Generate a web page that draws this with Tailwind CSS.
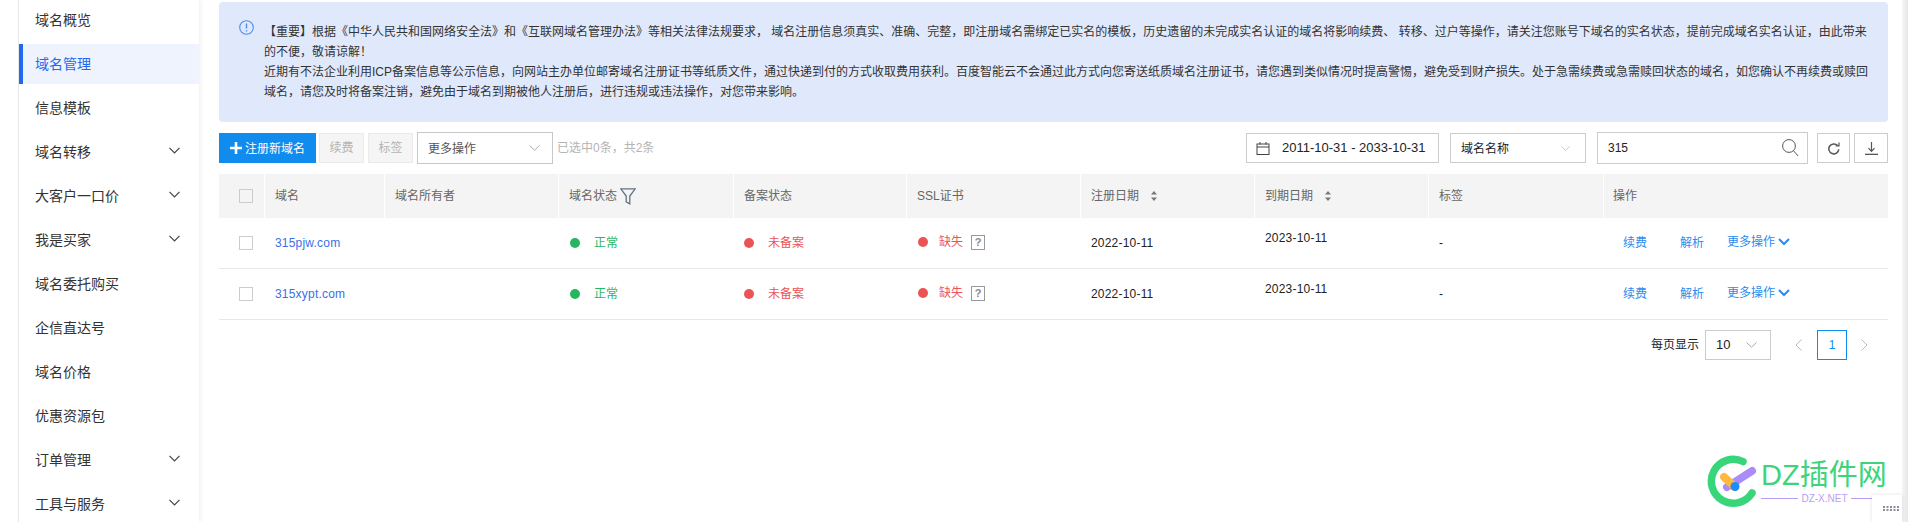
<!DOCTYPE html>
<html lang="zh-CN">
<head>
  <meta charset="UTF-8">
  <title>域名管理</title>
  <script src="https://cdn.jsdelivr.net/npm/@tailwindcss/browser@4"></script>
</head>
<body class="bg-white">
<div class="relative flex w-[1908px] h-[522px] overflow-hidden bg-white text-[12px] text-[#333] font-['Liberation_Sans','Noto_Sans_CJK_SC',sans-serif]">

  <!-- Sidebar -->
  <div class="w-[18px] shrink-0 border-r border-[#e8e8e8] box-content"></div>
  <div class="w-[180px] shrink-0 h-[522px] overflow-hidden flex flex-col gap-1 text-[14px] shadow-[2px_0_4px_rgba(0,0,0,0.06)]">
    <div class="h-10 shrink-0 flex items-center pt-px pl-4">域名概览</div>
    <div class="h-10 shrink-0 flex items-center pt-px pl-3 border-l-4 border-[#2468f2] bg-[#eef3fe] text-[#2468f2]">域名管理</div>
    <div class="h-10 shrink-0 flex items-center pt-px pl-4">信息模板</div>
    <div class="h-10 shrink-0 flex items-center pt-px justify-between pl-4 pr-[19px]">域名转移
      <svg class="mb-1" width="11" height="7" viewBox="0 0 11 7" fill="none" stroke="#444" stroke-width="1.2"><path d="M0.5 0.8 5.5 5.8 10.5 0.8"/></svg></div>
    <div class="h-10 shrink-0 flex items-center pt-px justify-between pl-4 pr-[19px]">大客户一口价
      <svg class="mb-1" width="11" height="7" viewBox="0 0 11 7" fill="none" stroke="#444" stroke-width="1.2"><path d="M0.5 0.8 5.5 5.8 10.5 0.8"/></svg></div>
    <div class="h-10 shrink-0 flex items-center pt-px justify-between pl-4 pr-[19px]">我是买家
      <svg class="mb-1" width="11" height="7" viewBox="0 0 11 7" fill="none" stroke="#444" stroke-width="1.2"><path d="M0.5 0.8 5.5 5.8 10.5 0.8"/></svg></div>
    <div class="h-10 shrink-0 flex items-center pt-px pl-4">域名委托购买</div>
    <div class="h-10 shrink-0 flex items-center pt-px pl-4">企信直达号</div>
    <div class="h-10 shrink-0 flex items-center pt-px pl-4">域名价格</div>
    <div class="h-10 shrink-0 flex items-center pt-px pl-4">优惠资源包</div>
    <div class="h-10 shrink-0 flex items-center pt-px justify-between pl-4 pr-[19px]">订单管理
      <svg class="mb-1" width="11" height="7" viewBox="0 0 11 7" fill="none" stroke="#444" stroke-width="1.2"><path d="M0.5 0.8 5.5 5.8 10.5 0.8"/></svg></div>
    <div class="h-10 shrink-0 flex items-center pt-px justify-between pl-4 pr-[19px]">工具与服务
      <svg class="mb-1" width="11" height="7" viewBox="0 0 11 7" fill="none" stroke="#444" stroke-width="1.2"><path d="M0.5 0.8 5.5 5.8 10.5 0.8"/></svg></div>
  </div>

  <!-- Main -->
  <div class="ml-5 w-[1669px] shrink-0 pt-[2px]">

    <!-- Notice -->
    <div class="h-[120px] rounded bg-[#e0e9fb] pl-5 pt-5 flex gap-[10px]">
      <svg class="shrink-0 mt-[-2px]" width="15" height="15" viewBox="0 0 15 15" fill="none" stroke="#4a8df0" stroke-width="1.1">
        <circle cx="7.5" cy="7.5" r="6.8"/><path d="M7.5 3.4V8.6M7.5 10.2V11.6" stroke-width="1.4"/>
      </svg>
      <p class="leading-5 whitespace-nowrap text-[12px]">
        【重要】根据《中华人民共和国网络安全法》和《互联网域名管理办法》等相关法律法规要求， 域名注册信息须真实、准确、完整，即注册域名需绑定已实名的模板，历史遗留的未完成实名认证的域名将影响续费、 转移、过户等操作，请关注您账号下域名的实名状态，提前完成域名实名认证，由此带来<br>
        的不便，敬请谅解！<br>
        近期有不法企业利用ICP备案信息等公示信息，向网站主办单位邮寄域名注册证书等纸质文件，通过快递到付的方式收取费用获利。百度智能云不会通过此方式向您寄送纸质域名注册证书，请您遇到类似情况时提高警惕，避免受到财产损失。处于急需续费或急需赎回状态的域名，如您确认不再续费或赎回<br>
        域名，请您及时将备案注销，避免由于域名到期被他人注册后，进行违规或违法操作，对您带来影响。
      </p>
    </div>

    <!-- Toolbar -->
    <div class="mt-[10px] h-8 flex items-center justify-between">
      <div class="flex items-center">
        <button class="w-[97px] h-[30px] bg-[#108cee] text-white flex items-center pl-[11px] gap-[3px]">
          <svg width="12" height="12" viewBox="0 0 12 12" fill="#fff"><path d="M4.7 0h2.6v4.7H12v2.6H7.3V12H4.7V7.3H0V4.7h4.7z"/></svg>
          <span class="pt-px">注册新域名</span>
        </button>
        <button class="ml-[3px] w-[45px] h-[30px] bg-[#f5f5f5] border border-[#ebebeb] text-[#b4b4b4]">续费</button>
        <button class="ml-1 w-[45px] h-[30px] bg-[#f5f5f5] border border-[#ebebeb] text-[#b4b4b4]">标签</button>
        <div class="ml-1 w-[136px] h-8 border border-[#c8c8c8] flex items-center justify-between pl-[10px] pr-[12px] text-[#555]"><span class="pt-px">更多操作</span>
          <svg width="11" height="6" viewBox="0 0 11 6" fill="none" stroke="#aaa"><path d="M0.5 0.5 5.5 5.2 10.5 0.5"/></svg>
        </div>
        <span class="ml-1 text-[#b4b4b4]">已选中0条，共2条</span>
      </div>
      <div class="flex items-center">
        <div class="w-[193px] h-[30px] border border-[#ccc] flex items-center pl-[9px] gap-3 text-[13px] text-[#222]">
          <svg width="14" height="13" viewBox="0 0 14 13" fill="none" stroke="#444"><rect x="1" y="2" width="12" height="10.5"/><path d="M1 5H13M4 0V2.5M10 0V2.5"/></svg>
          2011-10-31 - 2033-10-31
        </div>
        <div class="ml-[11px] w-[136px] h-[30px] border border-[#ccc] flex items-center justify-between pl-[10px] pr-[15px] text-[#222]"><span class="pt-px">域名名称</span>
          <svg width="9" height="5" viewBox="0 0 9 5" fill="none" stroke="#ccc"><path d="M0.5 0.5 4.5 4.5 8.5 0.5"/></svg>
        </div>
        <div class="ml-[11px] w-[211px] h-8 border border-[#ccc] flex items-center justify-between pl-[10px] pr-2 text-[#222]">315
          <svg width="17" height="18" viewBox="0 0 17 18" fill="none" stroke="#555"><circle cx="7" cy="7" r="6.4"/><path d="M11.5 11.8 16.2 17"/></svg>
        </div>
        <button class="ml-[9px] w-[33px] h-[30px] border border-[#ccc] flex items-center justify-center">
          <svg width="12" height="13" viewBox="0 0 12 13" fill="none" stroke="#555" stroke-width="1.5"><path d="M9.6 3.6A5 5 0 1 0 10.8 7.4"/><path d="M7.6 3.8H11V0.4" stroke-width="1.2"/></svg>
        </button>
        <button class="ml-1 w-[34px] h-[30px] border border-[#ccc] flex items-center justify-center">
          <svg width="13" height="13" viewBox="0 0 13 13" fill="none" stroke="#555" stroke-width="1.2"><path d="M6.5 0V9M3.500 6.2 6.5 9.4 9.5 6.2"/><path d="M0 12.4H13" stroke-width="1.4"/></svg>
        </button>
      </div>
    </div>

    <!-- Table -->
    <div class="mt-[10px]">
      <div class="h-11 bg-[#f4f4f4] text-[#666] grid grid-cols-[45px_120px_174px_175px_173px_174px_174px_174px_175px_285px] items-center">
        <div class="pl-5"><div class="w-[14px] h-[14px] border border-[#ccc]"></div></div>
        <div class="h-full border-l border-white pl-[10px] flex items-center">域名</div>
        <div class="h-full border-l border-white pl-[10px] flex items-center">域名所有者</div>
        <div class="h-full border-l border-white pl-[10px] flex items-center gap-[3px]">域名状态
          <svg width="16" height="17" viewBox="0 0 16 17" fill="none" stroke="#5f7287" stroke-width="1.3"><path d="M0.8 0.8H15.2L9.8 8V15.8L6.2 13.8V8Z"/></svg>
        </div>
        <div class="h-full border-l border-white pl-[10px] flex items-center">备案状态</div>
        <div class="h-full border-l border-white pl-[10px] flex items-center">SSL证书</div>
        <div class="h-full border-l border-white pl-[10px] flex items-center gap-3">注册日期
          <svg width="6" height="12" viewBox="0 0 6 12" fill="#777"><path d="M3 1 6 4.5H0zM3 11 0 7.5H6z"/></svg>
        </div>
        <div class="h-full border-l border-white pl-[10px] flex items-center gap-3">到期日期
          <svg width="6" height="12" viewBox="0 0 6 12" fill="#777"><path d="M3 1 6 4.5H0zM3 11 0 7.5H6z"/></svg>
        </div>
        <div class="h-full border-l border-white pl-[10px] flex items-center">标签</div>
        <div class="h-full border-l border-white pl-[9px] flex items-center">操作</div>
      </div>

      <div class="h-[51px] border-b border-[#e8e8e8] grid grid-cols-[45px_120px_174px_175px_173px_174px_174px_174px_175px_285px] items-center">
        <div class="pl-5"><div class="w-[14px] h-[14px] border border-[#ccc]"></div></div>
        <div class="pl-[11px] text-[#3b6fe8] tracking-[0.2px]">315pjw.com</div>
        <div></div>
        <div class="pl-3 flex items-center gap-[14px] text-[#2cb663]"><span class="w-[10px] h-[10px] rounded-full bg-[#27b560]"></span>正常</div>
        <div class="pl-[11px] flex items-center gap-[14px] text-[#ea5455]"><span class="w-[10px] h-[10px] rounded-full bg-[#ea5455]"></span>未备案</div>
        <div class="pl-3 flex items-center gap-[11px] text-[#ea5455] mb-[2px]"><span class="w-[10px] h-[10px] rounded-full bg-[#ea5455]"></span>缺失<span class="ml-[-3px] w-[14px] h-[15px] border border-[#999] text-[#888] text-[11px] leading-[13px] text-center font-bold">?</span></div>
        <div class="pl-[11px] text-[#222] tracking-[0.2px]">2022-10-11</div>
        <div class="pl-[11px] text-[#222] tracking-[0.2px] mb-[10px]">2023-10-11</div>
        <div class="pl-[11px] text-[#222]">-</div>
        <div class="pl-5 flex items-center text-[#2b8ced]">续费<span class="ml-[33px]">解析</span><span class="ml-[23px] flex items-center gap-[3px] mb-[2px]">更多操作
          <svg width="12" height="8" viewBox="0 0 12 8" fill="none" stroke="#2b8ced" stroke-width="2"><path d="M1 1 6 6 11 1"/></svg></span></div>
      </div>

      <div class="h-[51px] border-b border-[#e8e8e8] grid grid-cols-[45px_120px_174px_175px_173px_174px_174px_174px_175px_285px] items-center">
        <div class="pl-5"><div class="w-[14px] h-[14px] border border-[#ccc]"></div></div>
        <div class="pl-[11px] text-[#3b6fe8] tracking-[0.2px]">315xypt.com</div>
        <div></div>
        <div class="pl-3 flex items-center gap-[14px] text-[#2cb663]"><span class="w-[10px] h-[10px] rounded-full bg-[#27b560]"></span>正常</div>
        <div class="pl-[11px] flex items-center gap-[14px] text-[#ea5455]"><span class="w-[10px] h-[10px] rounded-full bg-[#ea5455]"></span>未备案</div>
        <div class="pl-3 flex items-center gap-[11px] text-[#ea5455] mb-[2px]"><span class="w-[10px] h-[10px] rounded-full bg-[#ea5455]"></span>缺失<span class="ml-[-3px] w-[14px] h-[15px] border border-[#999] text-[#888] text-[11px] leading-[13px] text-center font-bold">?</span></div>
        <div class="pl-[11px] text-[#222] tracking-[0.2px]">2022-10-11</div>
        <div class="pl-[11px] text-[#222] tracking-[0.2px] mb-[10px]">2023-10-11</div>
        <div class="pl-[11px] text-[#222]">-</div>
        <div class="pl-5 flex items-center text-[#2b8ced]">续费<span class="ml-[33px]">解析</span><span class="ml-[23px] flex items-center gap-[3px] mb-[2px]">更多操作
          <svg width="12" height="8" viewBox="0 0 12 8" fill="none" stroke="#2b8ced" stroke-width="2"><path d="M1 1 6 6 11 1"/></svg></span></div>
      </div>
    </div>

    <!-- Pagination -->
    <div class="mt-[10px] h-[30px] flex items-center justify-end pr-5 text-[#222]">
      每页显示
      <div class="ml-[6px] w-[66px] h-[30px] border border-[#ccc] flex items-center justify-between pl-[10px] pr-[13px] text-[13px]">10
        <svg width="11" height="6" viewBox="0 0 11 6" fill="none" stroke="#aaa"><path d="M0.5 0.5 5.5 5.2 10.5 0.5"/></svg>
      </div>
      <svg class="ml-[24px]" width="7" height="12" viewBox="0 0 7 12" fill="none" stroke="#bbb"><path d="M6.5 0.5 1 6 6.5 11.5"/></svg>
      <div class="ml-[15px] w-[30px] h-[30px] border border-[#108cee] text-[#108cee] flex items-center justify-center">1</div>
      <svg class="ml-[14px]" width="7" height="12" viewBox="0 0 7 12" fill="none" stroke="#bbb"><path d="M0.5 0.5 6 6 0.5 11.5"/></svg>
    </div>
  </div>

  <!-- Page scrollbar edge -->
  <div class="absolute top-0 right-0 h-full w-[6px] bg-gradient-to-r from-[#f6f6f6] to-[#e6e6e6]"></div>

  <!-- Watermark -->
  <svg class="absolute left-[1705px] top-[455px]" width="55" height="55" viewBox="0 0 55 55" fill="none" stroke-linecap="round">
    <path d="M38 6.5A22 22 0 1 0 47 38" stroke="#37d67a" stroke-width="7.5"/>
    <path d="M22 32 47 16" stroke="#a98bfa" stroke-width="8"/>
    <path d="M19 22 30 32" stroke="#fdb942" stroke-width="8"/>
    <circle cx="30" cy="31.5" r="4.5" fill="#1e8cfa"/>
  </svg>
  <div class="absolute left-[1761px] top-[457px] text-[29px] leading-9 text-[#3dd47c] whitespace-nowrap">DZ插件网</div>
  <div class="absolute left-[1761px] top-[491px] w-[127px] h-[14px] flex items-center gap-[3px] text-[10px] text-[#b89ef5]">
    <span class="h-px flex-1 bg-[#b89ef5]"></span>DZ-X.NET<span class="h-px flex-1 bg-[#b89ef5]"></span>
  </div>
  <div class="absolute left-[1872px] top-[495px] w-[30px] h-[27px] bg-white shadow-[0_0_4px_rgba(0,0,0,0.12)]">
    <svg class="ml-[11px] mt-[11px]" width="16" height="5" viewBox="0 0 16 5" fill="#8a8f99">
      <path d="M0 0h2v2H0zM3.5 0h2v2h-2zM7 0h2v2H7zM10.500 0h2v2h-2zM14 0h2v2h-2zM0 3h2v2H0zM3.5 3h2v2h-2zM7 3h2v2H7zM10.500 3h2v2h-2zM14 3h2v2h-2z"/>
    </svg>
  </div>
</div>
</body>
</html>
